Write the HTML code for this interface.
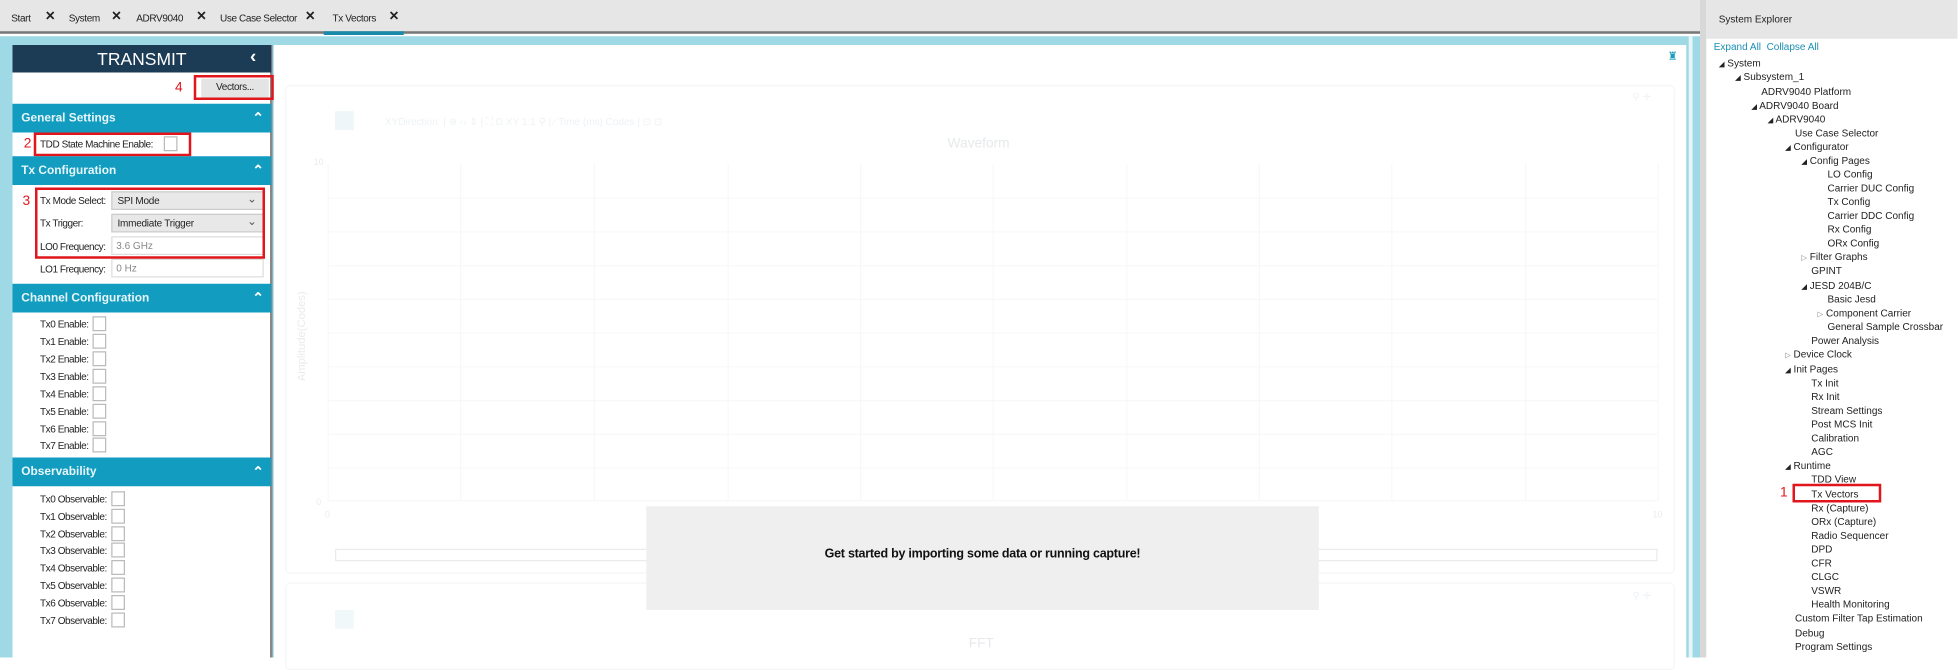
<!DOCTYPE html>
<html><head><meta charset="utf-8"><style>
*{margin:0;padding:0;box-sizing:border-box}
html,body{width:1958px;height:657px;overflow:hidden;background:#fff}
#c{position:absolute;left:0;top:0;width:1566px;height:526px;transform:scale(1.25);transform-origin:0 0;font-family:"Liberation Sans",sans-serif;font-size:8px;color:#222}
.a{position:absolute;white-space:nowrap}
.tb{letter-spacing:-0.3px}
.hdr{position:absolute;left:10px;width:207px;height:23px;background:#119cc0;color:#e8f6fa;font-size:9.5px;font-weight:bold;padding:6px 0 0 7px}
.hdr i{position:absolute;right:6px;top:5px;font-style:normal;font-size:11px;color:#fff}
.cb{position:absolute;width:11px;height:12px;border:1px solid #bbb;background:#fff}
.red{position:absolute;border:2.5px solid #e0161c}
.rn{position:absolute;color:#e0161c;font-size:11px}
.sel{position:absolute;left:89px;width:122px;height:15px;background:#e8e8e8;border:1px solid #ccc;font-size:8px;padding:2px 0 0 4px;letter-spacing:-0.2px}
.sel b{position:absolute;right:5px;top:0px;font-weight:normal;font-size:9px;color:#555}
.inp{position:absolute;left:89px;width:122px;height:15px;background:#fff;border:1px solid #ddd;color:#888;padding:2px 0 0 3px}
.t{position:absolute;font-size:8px;color:#222;white-space:nowrap}
.l{letter-spacing:-0.35px}
.gl{position:absolute;background:#f7f8f9}
.ax{position:absolute;color:#e8ebed;font-size:7px}
</style></head><body><div id="c">
<!-- tab bar -->
<div class="a" style="left:0;top:0;width:1360px;height:27px;background:#e6e6e6;border-bottom:2px solid #777"></div>
<div class="a tb" style="left:9px;top:10px">Start</div><div class="a" style="left:36px;top:8px;font-size:10px;font-weight:bold">✕</div>
<div class="a tb" style="left:55px;top:10px">System</div><div class="a" style="left:89px;top:8px;font-size:10px;font-weight:bold">✕</div>
<div class="a tb" style="left:109px;top:10px">ADRV9040</div><div class="a" style="left:157px;top:8px;font-size:10px;font-weight:bold">✕</div>
<div class="a tb" style="left:176px;top:10px">Use Case Selector</div><div class="a" style="left:244px;top:8px;font-size:10px;font-weight:bold">✕</div>
<div class="a tb" style="left:266px;top:10px">Tx Vectors</div><div class="a" style="left:311px;top:8px;font-size:10px;font-weight:bold">✕</div>
<div class="a" style="left:259px;top:25px;width:64px;height:3px;background:#1a8aaa"></div>
<!-- cyan bg -->
<div class="a" style="left:0;top:29px;width:1360px;height:497px;background:#9fd9e5"></div>
<div class="a" style="left:1351px;top:29px;width:3px;height:497px;background:#e9f6f9"></div>
<!-- main white -->
<div class="a" style="left:219px;top:36px;width:1130px;height:490px;background:#fff"></div>
<div class="a" style="left:1334px;top:40px;color:#1a9cbd;font-size:9px">♜</div>
<!-- chart card 1 -->
<div class="a" style="left:228px;top:68px;width:1112px;height:391px;border:1px solid #f6f6f6;border-radius:4px"></div>
<div class="a" style="left:268px;top:89px;width:15px;height:15px;background:#eef6f9"></div>
<div class="a" style="left:308px;top:93px;color:#eef2f4">XYDirection &nbsp;| ⊕ ‹› ⇕ | ⛶ Ω XY 1:1 ⚲ | ⁄ Time (ms) Codes | ⊡ ⊡</div>
<div class="a" style="left:758px;top:109px;font-size:11px;color:#e6e9eb">Waveform</div>
<div class="a" style="left:1306px;top:73px;color:#eef2f4">⚲ ✛</div>
<div class="ax" style="left:236px;top:305px;transform:rotate(-90deg);transform-origin:left top;font-size:9px">Amplitude(Codes)</div>
<div class="gl" style="left:262px;top:131px;width:1px;height:270px"></div>
<div class="gl" style="left:1326px;top:131px;width:1px;height:270px"></div>
<div class="gl" style="left:368px;top:131px;width:1px;height:270px"></div>
<div class="gl" style="left:475px;top:131px;width:1px;height:270px"></div>
<div class="gl" style="left:582px;top:131px;width:1px;height:270px"></div>
<div class="gl" style="left:688px;top:131px;width:1px;height:270px"></div>
<div class="gl" style="left:794px;top:131px;width:1px;height:270px"></div>
<div class="gl" style="left:901px;top:131px;width:1px;height:270px"></div>
<div class="gl" style="left:1007px;top:131px;width:1px;height:270px"></div>
<div class="gl" style="left:1113px;top:131px;width:1px;height:270px"></div>
<div class="gl" style="left:1220px;top:131px;width:1px;height:270px"></div>
<div class="gl" style="left:262px;top:158px;width:1064px;height:1px"></div>
<div class="gl" style="left:262px;top:185px;width:1064px;height:1px"></div>
<div class="gl" style="left:262px;top:212px;width:1064px;height:1px"></div>
<div class="gl" style="left:262px;top:239px;width:1064px;height:1px"></div>
<div class="gl" style="left:262px;top:266px;width:1064px;height:1px"></div>
<div class="gl" style="left:262px;top:293px;width:1064px;height:1px"></div>
<div class="gl" style="left:262px;top:320px;width:1064px;height:1px"></div>
<div class="gl" style="left:262px;top:347px;width:1064px;height:1px"></div>
<div class="gl" style="left:262px;top:374px;width:1064px;height:1px"></div>
<div class="gl" style="left:262px;top:400px;width:1064px;height:1px"></div>
<div class="ax" style="left:251px;top:127px">10</div><div class="ax" style="left:253px;top:399px">0</div>
<div class="ax" style="left:260px;top:409px">0</div><div class="ax" style="left:1322px;top:409px">10</div>
<div class="ax" style="left:768px;top:423px;font-size:9px">Time (ms)</div>
<div class="a" style="left:268px;top:439px;width:1058px;height:10px;border:1px solid #ebebeb"></div>
<!-- card 2 -->
<div class="a" style="left:228px;top:466px;width:1112px;height:70px;border:1px solid #f6f6f6;border-radius:4px"></div>
<div class="a" style="left:268px;top:488px;width:15px;height:15px;background:#f0f8fa"></div>
<div class="a" style="left:1306px;top:472px;color:#eef2f4">⚲ ✛</div>
<div class="a" style="left:775px;top:509px;font-size:11px;color:#e6e9eb">FFT</div>
<!-- overlay -->
<div class="a" style="left:517px;top:405px;width:538px;height:83px;background:#efefef"></div>
<div class="a" style="left:517px;top:438px;width:538px;text-align:center;font-size:10px;font-weight:bold;color:#111;letter-spacing:-0.2px">Get started by importing some data or running capture!</div>
<!-- left panel -->
<div class="a" style="left:10px;top:36px;width:208px;height:490px;background:#fff;border-right:2px solid #888"></div>
<div class="a" style="left:10px;top:36px;width:207px;height:22px;background:#1c3b55;color:#fff;font-size:14px;text-align:center;padding-top:3px">TRANSMIT</div>
<div class="a" style="left:200px;top:37px;color:#fff;font-size:15px;font-weight:bold">‹</div>
<div class="a" style="left:161px;top:63px;width:54px;height:15px;background:#e4e4e4;font-size:8px;text-align:center;padding-top:2px;letter-spacing:-0.3px">Vectors...</div>
<div class="red" style="left:155px;top:60px;width:64px;height:20px"></div><div class="rn" style="left:140px;top:64px">4</div>
<div class="hdr" style="top:83px">General Settings<i>⌃</i></div>
<div class="t l" style="left:32px;top:111px">TDD State Machine Enable:</div><div class="cb" style="left:131px;top:109px"></div>
<div class="red" style="left:27px;top:106px;width:126px;height:19px"></div><div class="rn" style="left:19px;top:109px">2</div>
<div class="hdr" style="top:125px">Tx Configuration<i>⌃</i></div>
<div class="t l" style="left:32px;top:156px">Tx Mode Select:</div><div class="sel" style="top:153px">SPI Mode<b>⌄</b></div>
<div class="t l" style="left:32px;top:174px">Tx Trigger:</div><div class="sel" style="top:171px">Immediate Trigger<b>⌄</b></div>
<div class="t l" style="left:32px;top:193px">LO0 Frequency:</div><div class="inp" style="top:189px">3.6 GHz</div>
<div class="t l" style="left:32px;top:211px">LO1 Frequency:</div><div class="inp" style="top:207px">0 Hz</div>
<div class="red" style="left:28px;top:150px;width:184px;height:57px"></div><div class="rn" style="left:18px;top:155px">3</div>
<div class="hdr" style="top:227px">Channel Configuration<i>⌃</i></div>
<div class="t l" style="left:32px;top:255px">Tx0 Enable:</div><div class="cb" style="left:74px;top:253px"></div>
<div class="t l" style="left:32px;top:269px">Tx1 Enable:</div><div class="cb" style="left:74px;top:267px"></div>
<div class="t l" style="left:32px;top:283px">Tx2 Enable:</div><div class="cb" style="left:74px;top:281px"></div>
<div class="t l" style="left:32px;top:297px">Tx3 Enable:</div><div class="cb" style="left:74px;top:295px"></div>
<div class="t l" style="left:32px;top:311px">Tx4 Enable:</div><div class="cb" style="left:74px;top:309px"></div>
<div class="t l" style="left:32px;top:325px">Tx5 Enable:</div><div class="cb" style="left:74px;top:323px"></div>
<div class="t l" style="left:32px;top:339px">Tx6 Enable:</div><div class="cb" style="left:74px;top:337px"></div>
<div class="t l" style="left:32px;top:352px">Tx7 Enable:</div><div class="cb" style="left:74px;top:350px"></div>
<div class="hdr" style="top:366px">Observability<i>⌃</i></div>
<div class="t l" style="left:32px;top:395px">Tx0 Observable:</div><div class="cb" style="left:89px;top:393px"></div>
<div class="t l" style="left:32px;top:409px">Tx1 Observable:</div><div class="cb" style="left:89px;top:407px"></div>
<div class="t l" style="left:32px;top:423px">Tx2 Observable:</div><div class="cb" style="left:89px;top:421px"></div>
<div class="t l" style="left:32px;top:436px">Tx3 Observable:</div><div class="cb" style="left:89px;top:434px"></div>
<div class="t l" style="left:32px;top:450px">Tx4 Observable:</div><div class="cb" style="left:89px;top:448px"></div>
<div class="t l" style="left:32px;top:464px">Tx5 Observable:</div><div class="cb" style="left:89px;top:462px"></div>
<div class="t l" style="left:32px;top:478px">Tx6 Observable:</div><div class="cb" style="left:89px;top:476px"></div>
<div class="t l" style="left:32px;top:492px">Tx7 Observable:</div><div class="cb" style="left:89px;top:490px"></div>
<!-- right panel -->
<div class="a" style="left:1360px;top:0;width:5px;height:526px;background:#d8d8d8"></div>
<div class="a" style="left:1365px;top:0;width:201px;height:31px;background:#e6e6e6"></div>
<div class="a" style="left:1375px;top:11px;font-size:8px">System Explorer</div>
<div class="a" style="left:1371px;top:33px;font-size:8px;color:#1a8fb5">Expand All &nbsp;Collapse All</div>
<div class="t" style="left:1375px;top:46px"><span style="font-size:6px">◢</span> System</div>
<div class="t" style="left:1388px;top:57px"><span style="font-size:6px">◢</span> Subsystem_1</div>
<div class="t" style="left:1409px;top:69px">ADRV9040 Platform</div>
<div class="t" style="left:1401px;top:80px"><span style="font-size:6px">◢</span> ADRV9040 Board</div>
<div class="t" style="left:1414px;top:91px"><span style="font-size:6px">◢</span> ADRV9040</div>
<div class="t" style="left:1436px;top:102px">Use Case Selector</div>
<div class="t" style="left:1428px;top:113px"><span style="font-size:6px">◢</span> Configurator</div>
<div class="t" style="left:1441px;top:124px"><span style="font-size:6px">◢</span> Config Pages</div>
<div class="t" style="left:1462px;top:135px">LO Config</div>
<div class="t" style="left:1462px;top:146px">Carrier DUC Config</div>
<div class="t" style="left:1462px;top:157px">Tx Config</div>
<div class="t" style="left:1462px;top:168px">Carrier DDC Config</div>
<div class="t" style="left:1462px;top:179px">Rx Config</div>
<div class="t" style="left:1462px;top:190px">ORx Config</div>
<div class="t" style="left:1441px;top:201px"><span style="font-size:6px;color:#888">▷</span> Filter Graphs</div>
<div class="t" style="left:1449px;top:212px">GPINT</div>
<div class="t" style="left:1441px;top:224px"><span style="font-size:6px">◢</span> JESD 204B/C</div>
<div class="t" style="left:1462px;top:235px">Basic Jesd</div>
<div class="t" style="left:1454px;top:246px"><span style="font-size:6px;color:#888">▷</span> Component Carrier</div>
<div class="t" style="left:1462px;top:257px">General Sample Crossbar</div>
<div class="t" style="left:1449px;top:268px">Power Analysis</div>
<div class="t" style="left:1428px;top:279px"><span style="font-size:6px;color:#888">▷</span> Device Clock</div>
<div class="t" style="left:1428px;top:291px"><span style="font-size:6px">◢</span> Init Pages</div>
<div class="t" style="left:1449px;top:302px">Tx Init</div>
<div class="t" style="left:1449px;top:313px">Rx Init</div>
<div class="t" style="left:1449px;top:324px">Stream Settings</div>
<div class="t" style="left:1449px;top:335px">Post MCS Init</div>
<div class="t" style="left:1449px;top:346px">Calibration</div>
<div class="t" style="left:1449px;top:357px">AGC</div>
<div class="t" style="left:1428px;top:368px"><span style="font-size:6px">◢</span> Runtime</div>
<div class="t" style="left:1449px;top:379px">TDD View</div>
<div class="t" style="left:1449px;top:391px">Tx Vectors</div>
<div class="red" style="left:1434px;top:387px;width:71px;height:15px"></div><div class="rn" style="left:1424px;top:388px">1</div>
<div class="t" style="left:1449px;top:402px">Rx (Capture)</div>
<div class="t" style="left:1449px;top:413px">ORx (Capture)</div>
<div class="t" style="left:1449px;top:424px">Radio Sequencer</div>
<div class="t" style="left:1449px;top:435px">DPD</div>
<div class="t" style="left:1449px;top:446px">CFR</div>
<div class="t" style="left:1449px;top:457px">CLGC</div>
<div class="t" style="left:1449px;top:468px">VSWR</div>
<div class="t" style="left:1449px;top:479px">Health Monitoring</div>
<div class="t" style="left:1436px;top:490px">Custom Filter Tap Estimation</div>
<div class="t" style="left:1436px;top:502px">Debug</div>
<div class="t" style="left:1436px;top:513px">Program Settings</div>
</div></body></html>
